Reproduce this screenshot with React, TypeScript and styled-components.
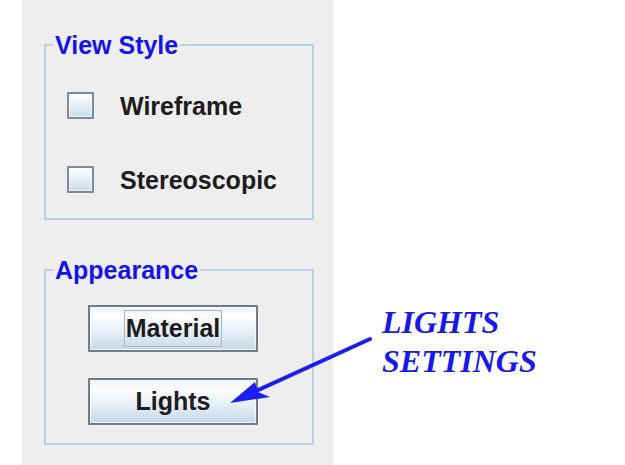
import React from "react";
import styled, { createGlobalStyle } from "styled-components";

const GlobalStyle = createGlobalStyle`
  html, body { margin: 0; padding: 0; background: #ffffff; }
  body { font-family: "Liberation Sans", Arial, sans-serif; }
`;

const Page = styled.div`
  position: relative;
  display: flex;
  width: 625px;
  height: 465px;
  overflow: hidden;
  background: #ffffff;
`;

const Panel = styled.div`
  box-sizing: border-box;
  margin-left: 22px;
  width: 311px;
  height: 465px;
  background: #eeeeee;
  padding: 31px 0 0 22px;
  display: flex;
  flex-direction: column;
  gap: 36px;
`;

const Group = styled.fieldset`
  box-sizing: border-box;
  width: 270px;
  margin: 0;
  border: 2px solid #bdd1e6;
  padding: 0;
`;

const Title = styled.legend`
  margin-left: 7px;
  padding: 0 2px;
  font-family: "Liberation Sans", Arial, sans-serif;
  font-weight: bold;
  font-size: 25px;
  line-height: 28px;
  color: #1414e8;
`;

const Body = styled.div<{ $pt: number; $pb: number; $pl: number; $gap: number }>`
  padding: ${(p) => p.$pt}px 0 ${(p) => p.$pb}px ${(p) => p.$pl}px;
  display: flex;
  flex-direction: column;
  gap: ${(p) => p.$gap}px;
`;

const CheckRow = styled.label`
  display: flex;
  align-items: center;
  gap: 26px;
  height: 28px;
`;

const Box = styled.span`
  box-sizing: border-box;
  width: 27px;
  height: 27px;
  border: 2px solid #7c8b9b;
  border-radius: 1px;
  background: linear-gradient(to bottom, #fbfdff 0%, #e9f0f7 45%, #c9dbec 100%);
  box-shadow: inset 0 0 0 1px rgba(255, 255, 255, 0.6);
`;

const CheckText = styled.span`
  font-family: "Liberation Sans", Arial, sans-serif;
  font-weight: bold;
  font-size: 25px;
  line-height: 28px;
  color: #1c1c1c;
  padding-top: 2px;
`;

const Button = styled.button`
  box-sizing: border-box;
  width: 170px;
  height: 47px;
  margin: 0;
  padding: 0;
  border: 2px solid #6f7c89;
  border-radius: 1px;
  background: linear-gradient(
    to bottom,
    #eef3f8 0%,
    #fdfeff 22%,
    #e8f0f7 55%,
    #c6d8ea 100%
  );
  box-shadow: inset 0 0 0 1px rgba(255, 255, 255, 0.7);
  display: flex;
  align-items: center;
  justify-content: center;
  font-family: "Liberation Sans", Arial, sans-serif;
  font-weight: bold;
  font-size: 25px;
  color: #1c1c1c;
  cursor: pointer;
`;

const Focus = styled.span`
  box-sizing: border-box;
  height: 37px;
  line-height: 35px;
  padding: 0 1px;
  border: 1px solid #9fb8d0;
`;

const Callout = styled.div`
  padding: 303px 0 0 49px;
  font-family: "Liberation Serif", "Times New Roman", serif;
  font-style: italic;
  font-weight: bold;
  font-size: 32px;
  line-height: 39px;
  color: #1818ea;
  white-space: nowrap;
`;

const Overlay = styled.svg`
  position: absolute;
  left: 0;
  top: 0;
  pointer-events: none;
`;

export default function App() {
  return (
    <>
      <GlobalStyle />
      <Page>
        <Panel>
          <Group>
            <Title>View Style</Title>
            <Body $pt={32} $pb={25} $pl={21} $gap={46}>
              <CheckRow>
                <Box />
                <CheckText>Wireframe</CheckText>
              </CheckRow>
              <CheckRow>
                <Box />
                <CheckText>Stereoscopic</CheckText>
              </CheckRow>
            </Body>
          </Group>
          <Group>
            <Title>Appearance</Title>
            <Body $pt={21} $pb={18} $pl={42} $gap={26}>
              <Button>
                <Focus>Material</Focus>
              </Button>
              <Button>Lights</Button>
            </Body>
          </Group>
        </Panel>
        <Callout>
          LIGHTS
          <br />
          SETTINGS
        </Callout>
        <Overlay width="625" height="465" viewBox="0 0 625 465">
          <line
            x1="370"
            y1="339"
            x2="254"
            y2="392"
            stroke="#1a1ff0"
            strokeWidth="4"
            strokeLinecap="round"
          />
          <polygon points="230,403 255,382 258,392 270,397" fill="#1a1ff0" />
        </Overlay>
      </Page>
    </>
  );
}
